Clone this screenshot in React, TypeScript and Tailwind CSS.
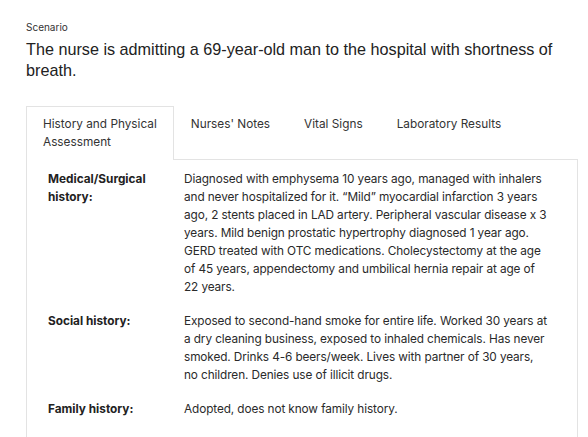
import React, { useState } from 'react'

const tabs = [['History and Physical', 'Assessment'], ["Nurses' Notes"], ['Vital Signs'], ['Laboratory Results']]

// lines kept as laid out in the source page
const rows = [
  {
    label: 'Medical/Surgical history:',
    lines: [
      'Diagnosed with emphysema 10 years ago, managed with inhalers',
      'and never hospitalized for it. \u201cMild\u201d myocardial infarction 3 years',
      'ago, 2 stents placed in LAD artery. Peripheral vascular disease x 3',
      'years. Mild benign prostatic hypertrophy diagnosed 1 year ago.',
      'GERD treated with OTC medications. Cholecystectomy at the age',
      'of 45 years, appendectomy and umbilical hernia repair at age of',
      '22 years.',
    ],
  },
  {
    label: 'Social history:',
    lines: [
      'Exposed to second-hand smoke for entire life. Worked 30 years at',
      'a dry cleaning business, exposed to inhaled chemicals. Has never',
      'smoked. Drinks 4-6 beers/week. Lives with partner of 30 years,',
      'no children. Denies use of illicit drugs.',
    ],
  },
  {
    label: 'Family history:',
    lines: ['Adopted, does not know family history.'],
  },
]

export default function App() {
  const [active, setActive] = useState(0)

  return (
    <div className="h-[437px] overflow-hidden bg-white pl-[26px] pr-[10px] pt-[20px] font-['Inter',sans-serif] text-[#222]">
      <div className="text-[10px] leading-[14px] text-[#333]">Scenario</div>
      <h1 className="mt-[5px] text-[16.2px] leading-[21px] font-['Liberation_Sans',sans-serif] text-[#222]">
        The nurse is admitting a 69-year-old man to the hospital with shortness of breath.
      </h1>

      <div className="mt-[25px] flex items-stretch">
        {tabs.map((t, i) => (
          <div
            key={t[0]}
            role="tab"
            onClick={() => setActive(i)}
            className={
              i === active
                ? 'cursor-pointer whitespace-nowrap border border-b-0 border-[#e3e3e3] bg-white px-[16px] pt-[8px] pb-[9px] text-[11.8px] leading-[18px] text-[#333]'
                : 'cursor-pointer whitespace-nowrap border-b border-[#e3e3e3] px-[17px] pt-[9px] pb-[9px] text-[11.8px] leading-[18px] text-[#333]'
            }
          >
            {t.map((l) => (
              <div key={l}>{l}</div>
            ))}
          </div>
        ))}
        <div className="flex-1 border-b border-[#e3e3e3]" />
      </div>

      <div className="overflow-hidden border-x border-[#e3e3e3] pl-[21px] pr-[10px] pt-[10px] pb-[10px]">
        {rows.map((r) => (
          <div key={r.label} className="mb-[16px] flex text-[11.8px] leading-[18px]">
            <div className="w-[136px] shrink-0 pr-[10px] font-bold text-[#222]">{r.label}</div>
            <div className="tracking-[-0.1px] text-[#2a2a2a]">
              {r.lines.map((l) => (
                <div key={l} className="whitespace-nowrap">
                  {l}
                </div>
              ))}
            </div>
          </div>
        ))}
      </div>
    </div>
  )
}
